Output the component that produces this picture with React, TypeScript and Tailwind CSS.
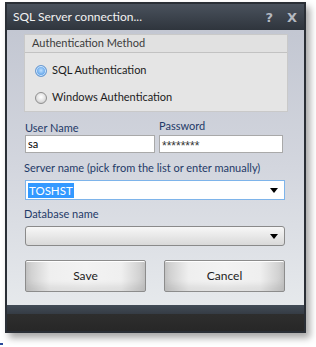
export default function App() {
  return (
    <div className="w-[316px] h-[347px] bg-white relative font-['Lato',sans-serif]">
      {/* Window */}
      <div className="absolute left-[5px] top-[2px] w-[301px] h-[331px] border-2 border-[#2a2f36] bg-[#2a2f36] flex flex-col shadow-[4px_5px_7px_rgba(0,0,0,0.35)]">
        {/* Title bar */}
        <div className="h-[26px] bg-gradient-to-b from-[#4a525d] to-[#2f353d] flex items-center justify-between pl-[6px] pr-[7px]">
          <span className="text-[12px] text-[#f2f2f2] leading-none whitespace-nowrap">SQL Server connection...</span>
          <div className="flex items-center gap-[14px] text-[#b4b9c1] font-black text-[13px] leading-none font-['DejaVu_Sans',sans-serif]">
            <span>?</span>
            <span>X</span>
          </div>
        </div>

        {/* Content */}
        <div className="h-[275px] bg-gradient-to-b from-[#c3c7d2] via-[#d3d6de] to-[#e6e9ec] pt-[4px] pl-[17px] pr-[16px] text-[11px] whitespace-nowrap">
          {/* Group box */}
          <div className="h-[78px] border border-[#c9c9c9] bg-[#e5e5e5] flex flex-col">
            <div className="h-[18px] border-b border-[#c2c2c2] bg-[#e1e1e1] flex items-center pl-[7px] text-[#3c3c3c]">
              Authentication Method
            </div>
            <div className="flex flex-col pl-[10px] pt-[10px] gap-[12px] text-[#1c1c1c]">
              <div className="flex items-center gap-[5px] h-[15px]">
                <span className="w-[12px] h-[12px] rounded-full border border-[#6b9ad0] bg-[radial-gradient(circle_at_50%_45%,#bfe0ff_0%,#6aa9ea_55%,#3f86d4_100%)] shadow-[inset_0_0_0_1px_#d8ebff]" />
                <span>SQL Authentication</span>
              </div>
              <div className="flex items-center gap-[5px] h-[15px]">
                <span className="w-[12px] h-[12px] rounded-full border border-[#8f8f8f] bg-[radial-gradient(circle_at_50%_40%,#ffffff_0%,#e0e0e0_55%,#bcbcbc_100%)]" />
                <span>Windows Authentication</span>
              </div>
            </div>
          </div>

          {/* User / Password */}
          <div className="flex gap-[4px] mt-[6px] pl-[1px]">
            <div className="flex flex-col w-[130px]">
              <span className="text-[#1f3a68] h-[16px] leading-[16px] mt-[2px]">User Name</span>
              <div className="h-[18px] mt-[-1px] border border-[#a9a9a9] bg-white flex items-center pl-[2px] text-black">sa</div>
            </div>
            <div className="flex flex-col w-[124px]">
              <span className="text-[#1f3a68] h-[16px] leading-[16px]">Password</span>
              <div className="h-[18px] mt-[1px] border border-[#a9a9a9] bg-white flex items-center pl-[2px] text-[12px] text-[#333] font-['Liberation_Sans',sans-serif] leading-none pt-[3px]">********</div>
            </div>
          </div>

          {/* Server name */}
          <div className="mt-[7px] text-[#1f3a68] h-[16px] leading-[16px]">Server name (pick from the list or enter manually)</div>
          <div className="mt-[4px] ml-[1px] w-[260px] h-[20px] border border-[#7eb4ea] bg-white flex items-center justify-between pl-[2px] pr-[6px]">
            <span className="bg-[#3399ff] text-white px-[1px] leading-[15px] text-[11.5px]">TOSHST</span>
            <span className="w-0 h-0 border-l-[4px] border-r-[4px] border-t-[5px] border-l-transparent border-r-transparent border-t-black" />
          </div>

          {/* Database name */}
          <div className="mt-[6px] text-[#1f3a68] h-[16px] leading-[16px]">Database name</div>
          <div className="mt-[4px] ml-[1px] w-[260px] h-[20px] border border-[#8a8a8a] rounded-[3px] bg-gradient-to-b from-[#f7f7f7] to-[#d9d9d9] flex items-center justify-end pr-[6px]">
            <span className="w-0 h-0 border-l-[4px] border-r-[4px] border-t-[5px] border-l-transparent border-r-transparent border-t-black" />
          </div>

          {/* Buttons */}
          <div className="flex justify-between mt-[14px] ml-[1px] w-[260px]">
            <button className="w-[121px] h-[32px] border border-[#8c8c8c] rounded-[2px] bg-[linear-gradient(to_right,#c9c9c9,#efefef_20%,#f3f3f3_50%,#efefef_80%,#c9c9c9)] shadow-[inset_0_1px_0_#ffffff,inset_0_-6px_6px_rgba(0,0,0,0.08)] text-[12px] text-[#1c1c1c]">
              Save
            </button>
            <button className="w-[121px] h-[32px] border border-[#8c8c8c] rounded-[2px] bg-[linear-gradient(to_right,#c9c9c9,#efefef_20%,#f3f3f3_50%,#efefef_80%,#c9c9c9)] shadow-[inset_0_1px_0_#ffffff,inset_0_-6px_6px_rgba(0,0,0,0.08)] text-[12px] text-[#1c1c1c]">
              Cancel
            </button>
          </div>
        </div>

        {/* Footer */}
        <div className="flex-1 flex flex-col">
          <div className="h-[9px] bg-gradient-to-b from-[#434c57] to-[#353c45]" />
          <div className="flex-1 bg-gradient-to-b from-[#2e2e2e] to-[#272727]" />
        </div>
      </div>
      <span className="absolute left-0 top-[343px] w-[3px] h-[2px] bg-[#2a4a9a]" />
    </div>
  );
}
